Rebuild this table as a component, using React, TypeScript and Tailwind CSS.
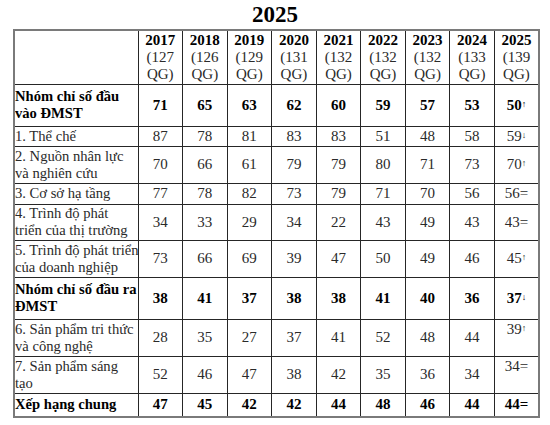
import React from 'react';

type Row = {
  label: string[];
  values: string[];
  last: string;
  mark?: '↑' | '↓' | '=';
  bold?: boolean;
  top?: boolean;
  h: string;
};

const years = [
  ['2017', '127'],
  ['2018', '126'],
  ['2019', '129'],
  ['2020', '131'],
  ['2021', '132'],
  ['2022', '132'],
  ['2023', '132'],
  ['2024', '133'],
  ['2025', '139'],
];

const rows: Row[] = [
  { label: ['Nhóm chỉ số đầu', 'vào ĐMST'], values: ['71', '65', '63', '62', '60', '59', '57', '53'], last: '50', mark: '↑', bold: true, h: 'h-[42px]' },
  { label: ['1. Thể chế'], values: ['87', '78', '81', '83', '83', '51', '48', '58'], last: '59', mark: '↓', h: 'h-[20px]' },
  { label: ['2. Nguồn nhân lực', 'và nghiên cứu'], values: ['70', '66', '61', '79', '79', '80', '71', '73'], last: '70', mark: '↑', h: 'h-[37px]' },
  { label: ['3. Cơ sở hạ tầng'], values: ['77', '78', '82', '73', '79', '71', '70', '56'], last: '56', mark: '=', h: 'h-[21px]' },
  { label: ['4. Trình độ phát', 'triển của thị trường'], values: ['34', '33', '29', '34', '22', '43', '49', '43'], last: '43', mark: '=', h: 'h-[36px]' },
  { label: ['5. Trình độ phát triển', 'của doanh nghiệp'], values: ['73', '66', '69', '39', '47', '50', '49', '46'], last: '45', mark: '↑', h: 'h-[37px]' },
  { label: ['Nhóm chỉ số đầu ra', 'ĐMST'], values: ['38', '41', '37', '38', '38', '41', '40', '36'], last: '37', mark: '↓', bold: true, h: 'h-[42px]' },
  { label: ['6. Sản phẩm tri thức', 'và công nghệ'], values: ['28', '35', '27', '37', '41', '52', '48', '44'], last: '39', mark: '↑', top: true, h: 'h-[37px]' },
  { label: ['7. Sản phẩm sáng', 'tạo'], values: ['52', '46', '47', '38', '42', '35', '36', '34'], last: '34', mark: '=', top: true, h: 'h-[37px]' },
  { label: ['Xếp hạng chung'], values: ['47', '45', '42', '42', '44', '48', '46', '44'], last: '44', mark: '=', bold: true, h: 'h-[24px]' },
];

const cell = 'border-[1.5px] border-[#262626] p-0';

function Last({ row }: { row: Row }) {
  return (
    <span>
      {row.last}
      {row.mark === '=' ? (
        <span>=</span>
      ) : (
        <sup className="relative -top-[3px] text-[9px] font-normal">{row.mark}</sup>
      )}
    </span>
  );
}

export default function App() {
  return (
    <div className="h-[425px] w-[550px] overflow-hidden bg-white font-['Liberation_Serif',serif] text-[#2a2a2a]">
      <h1 className="h-[29px] pt-[1px] text-center text-[23px] leading-[28px] font-bold text-black">2025</h1>
      <table className="ml-[13px] w-[527px] table-fixed border-collapse border-2 border-[#7a7a7a] text-[15px] leading-[17px]">
        <colgroup>
          <col className="w-[124px]" />
          {years.map((y) => (
            <col key={y[0]} />
          ))}
        </colgroup>
        <thead>
          <tr className="h-[54px]">
            <th className={cell}></th>
            {years.map(([y, n]) => (
              <th key={y} className={`${cell} text-center align-middle leading-[17px] font-normal`}>
                <div className="font-bold text-black">{y}</div>
                <div>({n}</div>
                <div>QG)</div>
              </th>
            ))}
          </tr>
        </thead>
        <tbody>
          {rows.map((row) => (
            <tr key={row.label[0]} className={`${row.h} ${row.bold ? 'font-bold text-black' : ''}`}>
              <td className={`${cell} overflow-hidden text-left text-[14.6px] whitespace-nowrap`}>
                {row.label.map((l) => (
                  <div key={l}>{l}</div>
                ))}
              </td>
              {row.values.map((v, i) => (
                <td key={i} className={`${cell} text-center align-middle`}>
                  {v}
                </td>
              ))}
              <td className={`${cell} text-center ${row.top ? 'align-top pt-[1px]' : 'align-middle'}`}>
                <Last row={row} />
              </td>
            </tr>
          ))}
        </tbody>
      </table>
      <div className="mt-[7px] h-px w-full bg-[#ececec]" />
    </div>
  );
}
